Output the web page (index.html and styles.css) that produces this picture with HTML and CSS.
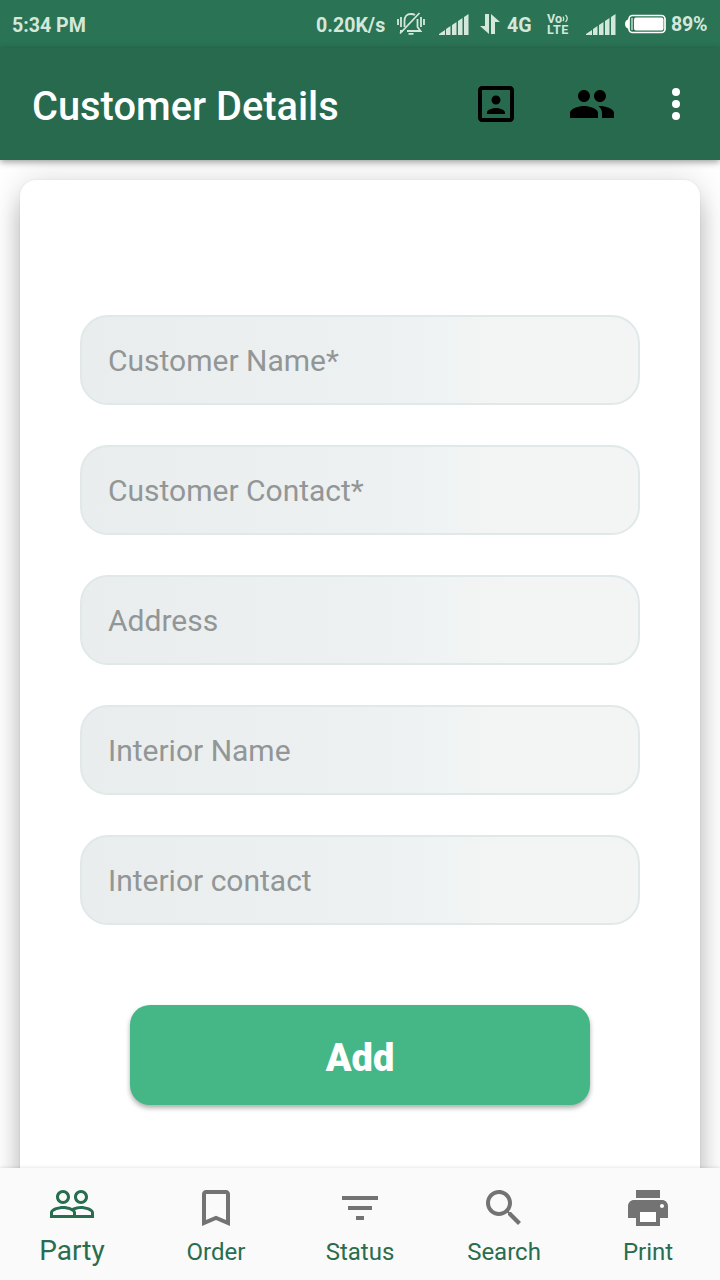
FILE: index.html
```html
<!DOCTYPE html>
<html lang="en">
<head>
<meta charset="utf-8">
<title>Customer Details</title>
<link rel="stylesheet" href="styles.css">
</head>
<body>
<div class="screen">
  <div class="status">
    <span class="clock">5:34 PM</span>
    <span class="rate">0.20K/s</span>
    <svg class="mute" viewBox="0 0 28 26" width="28" height="26" fill="none" stroke="currentColor" stroke-width="1.800">
      <path d="M7.500 16V10Q7.500 3 14 3q2.500 0 4 1M20.500 8v8l3 4H10M3 20h3M11.500 22.800h5M3 22.500 22.500 2"/>
      <path d="M1 8v6M4 6v10M24 6v10M27 8v6"/>
    </svg>
    <svg class="signal first" viewBox="0 0 30 21" width="30" height="21" fill="currentColor"><path d="M0 21v-1l6-4v5zM7 15l4.500-3v9H7zM13 11l4.500-3v13H13zM19 7l4.500-3v17H19zM25 3l4.500-3v21H25z"/></svg>
    <svg class="data" viewBox="0 0 20 20" width="20" height="20" fill="currentColor"><path d="M5 0h4v20L0 12h5zM11 0l9 8h-5v12h-4z"/></svg>
    <span class="net">4G</span>
    <span class="volte"><span>Vo<svg viewBox="0 0 8 10" width="7" height="9" fill="none" stroke="currentColor" stroke-width="1.400"><path d="M1 3q2 2 0 5M4 1q4 4 0 8"/></svg></span><span>LTE</span></span>
    <svg class="signal second" viewBox="0 0 30 21" width="30" height="21" fill="currentColor"><path d="M0 21v-1l6-4v5zM7 15l4.500-3v9H7zM13 11l4.500-3v13H13zM19 7l4.500-3v17H19zM25 3l4.500-3v21H25z"/></svg>
    <svg class="battery" viewBox="0 0 41 20" width="41" height="20"><rect x="4" y="1.500" width="36" height="17" rx="3.500" fill="none" stroke="#fff" stroke-width="1.700"/><path d="M4 5Q0 6 0 10t4 5z" fill="#fff"/><rect x="9" y="3.500" width="29.500" height="13" rx="2" fill="#fff"/><path d="M6 4h2v12H6z" fill="#9cc1ad"/></svg>
    <span class="percent">89%</span>
  </div>
  <header class="appbar">
    <h1>Customer Details</h1>
    <svg class="icon portrait" viewBox="0 0 24 24"><path d="M12 12.250c1.240 0 2.250-1.010 2.250-2.250S13.240 7.750 12 7.750 9.750 8.760 9.750 10s1.010 2.250 2.250 2.250zm4.500 4c0-1.500-3-2.250-4.500-2.250s-4.500.75-4.500 2.250V17h9v-.75zM19 3H5c-1.100 0-2 .9-2 2v14c0 1.100.9 2 2 2h14c1.100 0 2-.9 2-2V5c0-1.100-.9-2-2-2zm0 16H5V5h14v14z"/></svg>
    <svg class="icon people" viewBox="0 0 24 24"><path d="M16 11c1.660 0 2.990-1.340 2.990-3S17.660 5 16 5c-1.660 0-3 1.340-3 3s1.340 3 3 3zm-8 0c1.660 0 2.990-1.340 2.990-3S9.660 5 8 5C6.340 5 5 6.340 5 8s1.340 3 3 3zm0 2c-2.330 0-7 1.170-7 3.500V19h14v-2.500c0-2.330-4.670-3.500-7-3.500zm8 0c-.29 0-.62.02-.97.05 1.160.84 1.970 1.970 1.970 3.450V19h6v-2.500c0-2.330-4.670-3.500-7-3.500z"/></svg>
    <svg class="icon more" viewBox="0 0 24 24"><circle cx="12" cy="6" r="2"/><circle cx="12" cy="12" r="2"/><circle cx="12" cy="18" r="2"/></svg>
  </header>
  <main class="content">
    <form class="card">
      <input class="field" type="text" placeholder="Customer Name*">
      <input class="field" type="text" placeholder="Customer Contact*">
      <input class="field" type="text" placeholder="Address">
      <input class="field" type="text" placeholder="Interior Name">
      <input class="field" type="text" placeholder="Interior contact">
      <button class="add" type="button">Add</button>
    </form>
  </main>
  <nav class="tabs">
    <a class="tab active"><svg class="icon" viewBox="0 0 24 24"><path d="M16.500 13c-1.200 0-3.070.34-4.500 1-1.430-.67-3.300-1-4.500-1C5.330 13 1 14.080 1 16.250V19h22v-2.750c0-2.170-4.330-3.250-6.500-3.250zm-4 4.500h-10v-1.250c0-.54 2.560-1.750 5-1.750s5 1.210 5 1.750v1.250zm9 0H14v-1.250c0-.46-.2-.86-.52-1.220.88-.3 1.960-.53 3.020-.53 2.440 0 5 1.210 5 1.750v1.250zM7.500 12c1.930 0 3.500-1.570 3.500-3.500S9.430 5 7.500 5 4 6.570 4 8.500 5.570 12 7.500 12zm0-5.500c1.100 0 2 .9 2 2s-.9 2-2 2-2-.9-2-2 .9-2 2-2zm9 5.500c1.930 0 3.500-1.570 3.500-3.500S18.430 5 16.500 5 13 6.570 13 8.500s1.570 3.500 3.500 3.500zm0-5.500c1.100 0 2 .9 2 2s-.9 2-2 2-2-.9-2-2 .9-2 2-2z"/></svg><span>Party</span></a>
    <a class="tab"><svg class="icon" viewBox="0 0 24 24"><path d="M17 3H7c-1.100 0-2 .9-2 2v16l7-3 7 3V5c0-1.100-.9-2-2-2zm0 15l-5-2.180L7 18V5h10v13z"/></svg><span>Order</span></a>
    <a class="tab"><svg class="icon" viewBox="0 0 24 24"><path d="M10 18h4v-2h-4v2zM3 6v2h18V6H3zm3 7h12v-2H6v2z"/></svg><span>Status</span></a>
    <a class="tab"><svg class="icon" viewBox="0 0 24 24"><path d="M15.500 14h-.79l-.28-.27C15.410 12.590 16 11.110 16 9.500 16 5.910 13.090 3 9.500 3S3 5.910 3 9.500 5.910 16 9.500 16c1.610 0 3.090-.59 4.230-1.570l.27.28v.79l5 4.990L20.490 19l-4.990-5zm-6 0C7.010 14 5 11.990 5 9.500S7.010 5 9.500 5 14 7.010 14 9.500 11.990 14 9.500 14z"/></svg><span>Search</span></a>
    <a class="tab"><svg class="icon" viewBox="0 0 24 24"><path fill="#fff" d="M8 14h8v5H8zM18 10h2v2h-2z"/><path d="M19 8H5c-1.660 0-3 1.340-3 3v6h4v4h12v-4h4v-6c0-1.660-1.340-3-3-3zm-3 11H8v-5h8v5zm3-7c-.55 0-1-.45-1-1s.45-1 1-1 1 .45 1 1-.45 1-1 1zm-1-9H6v4h12V3z"/></svg><span>Print</span></a>
  </nav>
</div>
</body>
</html>
```
FILE: styles.css
```css
* { box-sizing: border-box; }
body { margin: 0; background: #fff; font-family: Roboto, "Noto Sans", sans-serif; }
.screen { width: 720px; height: 1280px; display: flex; flex-direction: column; overflow: hidden; }
.status { height: 48px; flex: none; display: flex; align-items: center; padding-left: 12px; background: #2b7355; color: #d3e8db; font-size: 19.600px; font-weight: 700; line-height: 48px; white-space: nowrap; }
.status > * { flex: none; }
.clock { width: 304px; padding-top: 4px; }
.rate { width: 81px; padding-top: 4px; }
.signal.first { margin-left: 14px; }
.data { margin-left: 11px; }
.net { margin-left: 7px; width: 40px; padding-top: 4px; }
.volte { width: 39px; height: 26px; margin-top: 4px; display: grid; grid-template-rows: 11px 12px; font-size: 12.500px; font-weight: 700; line-height: 11px; }
.volte span:last-child { line-height: 12px; letter-spacing: .6px; }
.battery { margin: 0 5px 0 9px; }
.percent { padding-top: 2px; letter-spacing: -.2px; }
.icon { display: block; width: 48px; height: 48px; fill: currentColor; flex: none; }
.appbar { position: relative; z-index: 2; height: 112px; flex: none; display: flex; align-items: center; padding: 0 20px 0 32px; background: #286a4d; color: #000; box-shadow: 0 2px 7px rgba(0,0,0,.4); }
h1 { margin: 5px auto 0 0; color: #fff; font-size: 39.800px; line-height: 48px; font-weight: 500; white-space: nowrap; }
.people { margin-left: 48px; }
.more { margin-left: 36px; color: #fff; }
.content { flex: 1; min-height: 0; padding: 20px 20px 0; overflow: hidden; }
.card { display: flex; flex-direction: column; align-items: center; gap: 40px; height: 1200px; padding-top: 135px; border-radius: 16px; background: #fff; box-shadow: 0 0 2px rgba(0,0,0,.08), 0 0 32px rgba(0,0,0,.14), 0 20px 24px rgba(0,0,0,.2); }
.field { width: 560px; height: 90px; flex: none; margin: 0; padding: 0 26px; border: 2px solid #e1e8ea; border-radius: 28px; background: linear-gradient(90deg, #e9edee, #edf1f2 55%, #f3f5f4 75%, #f3f5f4); font: 400 30px/40px Roboto, sans-serif; outline: 0; }
.field::placeholder { color: #929696; opacity: 1; }
.add { width: 460px; height: 100px; flex: none; margin: 40px 0 0; padding: 5px 0 0; border: 0; border-radius: 20px; background: #45b787; color: #fff; font: 900 38px/46px Roboto, sans-serif; box-shadow: 0 3px 5px rgba(0,0,0,.32); }
.tabs { position: relative; z-index: 2; height: 112px; flex: none; display: flex; background: #fafafa; box-shadow: 0 -1px 3px rgba(0,0,0,.09); }
.tab { width: 144px; display: flex; flex-direction: column; align-items: center; padding-top: 16px; color: #737373; font-size: 24px; line-height: 28px; }
.tab span { margin-top: 6px; color: #286d4f; }
.tab.active { padding-top: 12px; color: #286d4f; font-size: 28px; line-height: 32px; }
.tab.active span { margin-top: 7px; }
```
